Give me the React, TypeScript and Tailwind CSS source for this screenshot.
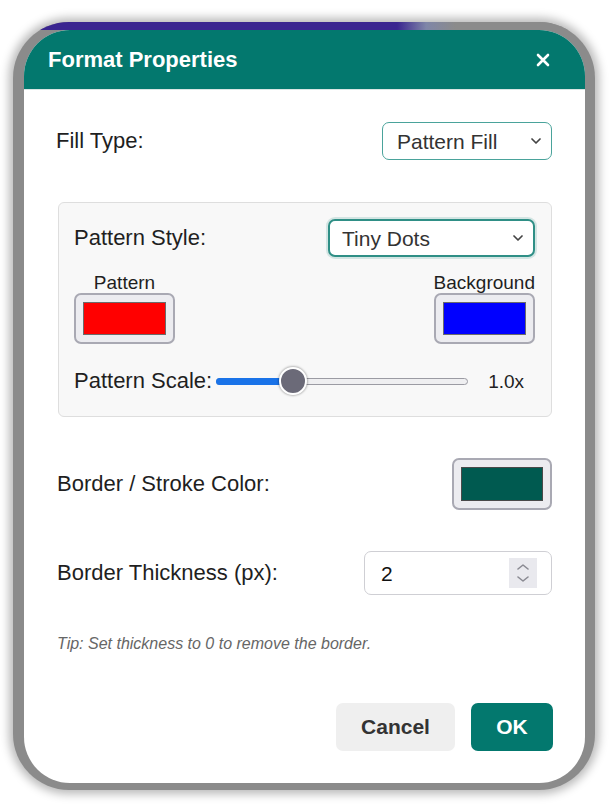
import React from "react";

function Chevron({ className = "" }: { className?: string }) {
  return (
    <svg width="10" height="6" viewBox="0 0 10 6" className={className}>
      <polyline points="1,1 5,5 9,1" fill="none" stroke="#444" strokeWidth="1.7" strokeLinecap="round" strokeLinejoin="round" />
    </svg>
  );
}

function Swatch({ color, w }: { color: string; w: string }) {
  return (
    <div className={`${w} h-[51px] rounded-[7px] border-2 border-[#a9a9b3] bg-[#ececf0] p-[7px]`}>
      <div className="w-full h-full border border-[#6b6b6b]" style={{ backgroundColor: color }} />
    </div>
  );
}

export default function App() {
  return (
    <div className="w-[610px] h-[811px] bg-white pt-[22px] pl-[13px] font-[family-name:'Liberation_Sans',Arial,sans-serif] text-[#1f1f1f]">
      <div className="w-[582px] h-[768px] rounded-[56px] overflow-hidden bg-[#8b8b8b] shadow-[0_0_10px_4px_rgba(0,0,0,0.28)] flex flex-col">
        <div className="h-[8px] shrink-0 bg-[linear-gradient(to_right,#3a2590_0%,#3a2590_66%,#7f86a8_71%,#8b8b8b_76%)]" />
        <div className="flex-1 ml-[11px] mr-[10px] mb-[7px] bg-white rounded-[46px] overflow-hidden flex flex-col">
          <div className="h-[60px] shrink-0 bg-[#03786e] border-b border-[#d9e6e4] flex items-center justify-between pl-[24px] pr-[35px]">
            <span className="text-white font-bold text-[22px] leading-none">Format Properties</span>
            <svg width="14" height="14" viewBox="0 0 14 14">
              <path d="M2 2 L12 12 M12 2 L2 12" stroke="white" strokeWidth="2.6" strokeLinecap="round" />
            </svg>
          </div>

          <div className="px-[33px] flex flex-col">
            <div className="mt-[32px] h-[38px] flex items-center justify-between">
              <span className="text-[22px] leading-none -ml-[1px]">Fill Type:</span>
              <div className="w-[170px] h-[38px] border-[1.5px] border-[#4aa39b] rounded-[7px] pl-[14px] pr-[10px] flex items-center justify-between bg-white">
                <span className="text-[21px] text-[#333] leading-none">Pattern Fill</span>
                <Chevron />
              </div>
            </div>

            <div className="mt-[42px] ml-[1px] w-[494px] h-[215px] bg-[#f8f8f8] border border-[#dedede] rounded-[6px] pt-[16px] pl-[15px] pr-[16px] flex flex-col">
              <div className="h-[38px] flex items-center justify-between">
                <span className="text-[22px] leading-none">Pattern Style:</span>
                <div className="w-[207px] h-[38px] border-2 border-[#2f8f86] shadow-[0_0_0_2px_rgba(0,122,110,0.15)] rounded-[7px] pl-[12px] pr-[10px] flex items-center justify-between bg-white">
                  <span className="text-[21px] text-[#333] leading-none">Tiny Dots</span>
                  <Chevron />
                </div>
              </div>

              <div className="mt-[15px] flex justify-between">
                <div className="flex flex-col items-center">
                  <span className="text-[19px] leading-[21px] h-[21px]">Pattern</span>
                  <Swatch color="#ff0000" w="w-[101px]" />
                </div>
                <div className="flex flex-col items-center">
                  <span className="text-[19px] leading-[21px] h-[21px]">Background</span>
                  <Swatch color="#0000ff" w="w-[101px]" />
                </div>
              </div>

              <div className="mt-[22px] h-[30px] flex items-center">
                <span className="text-[22px] leading-none">Pattern Scale:</span>
                <div className="relative ml-[4px] w-[252px] h-[28px]">
                  <div className="absolute left-0 right-0 top-[11px] h-[7px] rounded-full bg-[#efeff1] border border-[#9b9ba3]" />
                  <div className="absolute left-0 w-[80px] top-[11px] h-[7px] rounded-full bg-[#1a73e8]" />
                  <div className="absolute left-[63px] top-[0px] w-[28px] h-[28px] rounded-full bg-[#6b6a78] border-2 border-white shadow-[0_0_2px_1px_rgba(0,0,0,0.25)]" />
                </div>
                <span className="ml-[20px] text-[19px] leading-none">1.0x</span>
              </div>
            </div>

            <div className="mt-[41px] h-[52px] flex items-center justify-between">
              <span className="text-[22px] leading-none">Border / Stroke Color:</span>
              <div className="w-[100px] h-[52px] rounded-[7px] border-2 border-[#a9a9b3] bg-[#ececf0] p-[7px]">
                <div className="w-full h-full border border-[#4a4a4a] bg-[#005a50]" />
              </div>
            </div>

            <div className="mt-[41px] h-[44px] flex items-center justify-between">
              <span className="text-[22px] leading-none">Border Thickness (px):</span>
              <div className="w-[188px] h-[44px] border border-[#cfcfd4] rounded-[7px] pl-[16px] pr-[14px] flex items-center justify-between bg-white">
                <span className="text-[21px] leading-none text-[#111]">2</span>
                <div className="w-[28px] h-[30px] bg-[#e9e9ee] flex flex-col items-center justify-center gap-[6px]">
                  <svg width="12" height="6" viewBox="0 0 12 6">
                    <polyline points="1,5 6,1 11,5" fill="none" stroke="#8a8a92" strokeWidth="1.6" strokeLinecap="round" strokeLinejoin="round" />
                  </svg>
                  <svg width="12" height="6" viewBox="0 0 12 6">
                    <polyline points="1,1 6,5 11,1" fill="none" stroke="#8a8a92" strokeWidth="1.6" strokeLinecap="round" strokeLinejoin="round" />
                  </svg>
                </div>
              </div>
            </div>

            <div className="mt-[40px] text-[16px] leading-[18px] italic text-[#666]">
              Tip: Set thickness to 0 to remove the border.
            </div>

            <div className="mt-[50px] flex justify-end gap-[16px] -mr-[1px]">
              <button className="w-[119px] h-[48px] rounded-[7px] bg-[#efefef] font-bold text-[21px] text-[#333]">Cancel</button>
              <button className="w-[82px] h-[48px] rounded-[7px] bg-[#03786e] font-bold text-[21px] text-white">OK</button>
            </div>
          </div>
        </div>
      </div>
    </div>
  );
}
